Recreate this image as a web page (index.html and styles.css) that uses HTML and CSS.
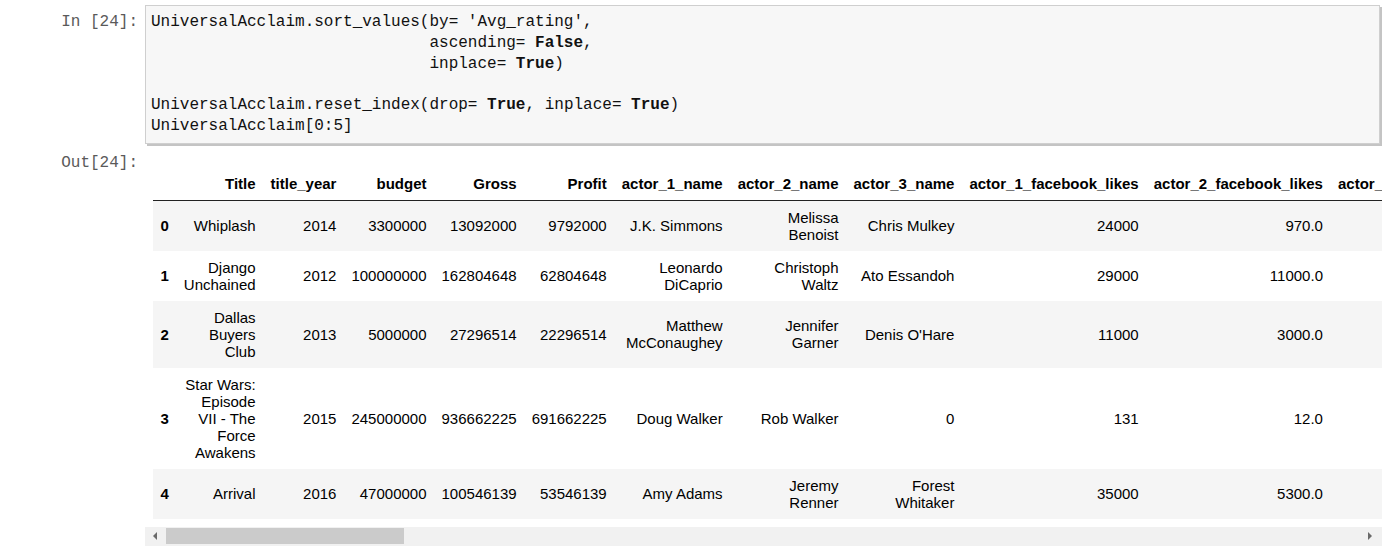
FILE: index.html
```html
<!DOCTYPE html>
<html>
<head>
<meta charset="utf-8">
<link rel="stylesheet" href="styles.css">
</head>
<body>
<div class="notebook">
  <div class="cell">
    <div class="prompt in-prompt">In&nbsp;[24]:</div>
<pre class="code">UniversalAcclaim.sort_values(by= 'Avg_rating',
                             ascending= <b>False</b>,
                             inplace= <b>True</b>)

UniversalAcclaim.reset_index(drop= <b>True</b>, inplace= <b>True</b>)
UniversalAcclaim[0:5]</pre>
  </div>
  <div class="cell out-cell">
    <div class="prompt out-prompt">Out[24]:</div>
    <div class="output">
      <div class="table-wrap">
        <table class="df">
          <thead>
            <tr>
              <th></th>
              <th>Title</th>
              <th>title_year</th>
              <th>budget</th>
              <th>Gross</th>
              <th>Profit</th>
              <th>actor_1_name</th>
              <th>actor_2_name</th>
              <th>actor_3_name</th>
              <th>actor_1_facebook_likes</th>
              <th>actor_2_facebook_likes</th>
              <th>actor_3_facebook_likes</th>
              <th>director_name</th>
            </tr>
          </thead>
          <tbody>
            <tr>
              <th>0</th>
              <td>Whiplash</td>
              <td>2014</td>
              <td>3300000</td>
              <td>13092000</td>
              <td>9792000</td>
              <td>J.K. Simmons</td>
              <td>Melissa Benoist</td>
              <td>Chris Mulkey</td>
              <td>24000</td>
              <td>970.0</td>
              <td>535.0</td>
              <td>Damien Chazelle</td>
            </tr>
            <tr>
              <th>1</th>
              <td>Django Unchained</td>
              <td>2012</td>
              <td>100000000</td>
              <td>162804648</td>
              <td>62804648</td>
              <td>Leonardo DiCaprio</td>
              <td>Christoph Waltz</td>
              <td>Ato Essandoh</td>
              <td>29000</td>
              <td>11000.0</td>
              <td>265.0</td>
              <td>Quentin Tarantino</td>
            </tr>
            <tr>
              <th>2</th>
              <td>Dallas Buyers Club</td>
              <td>2013</td>
              <td>5000000</td>
              <td>27296514</td>
              <td>22296514</td>
              <td>Matthew McConaughey</td>
              <td>Jennifer Garner</td>
              <td>Denis O'Hare</td>
              <td>11000</td>
              <td>3000.0</td>
              <td>896.0</td>
              <td>Jean-Marc Vallée</td>
            </tr>
            <tr>
              <th>3</th>
              <td>Star Wars: Episode VII - The Force Awakens</td>
              <td>2015</td>
              <td>245000000</td>
              <td>936662225</td>
              <td>691662225</td>
              <td>Doug Walker</td>
              <td>Rob Walker</td>
              <td>0</td>
              <td>131</td>
              <td>12.0</td>
              <td>0.0</td>
              <td>Doug Walker</td>
            </tr>
            <tr>
              <th>4</th>
              <td>Arrival</td>
              <td>2016</td>
              <td>47000000</td>
              <td>100546139</td>
              <td>53546139</td>
              <td>Amy Adams</td>
              <td>Jeremy Renner</td>
              <td>Forest Whitaker</td>
              <td>35000</td>
              <td>5300.0</td>
              <td>1000.0</td>
              <td>Denis Villeneuve</td>
            </tr>
          </tbody>
        </table>
      </div>
      <div class="hscroll">
        <span class="arrow arrow-left"></span>
        <span class="thumb"></span>
        <span class="track-rest"></span>
        <span class="arrow arrow-right"></span>
      </div>
    </div>
  </div>
</div>
</body>
</html>
```
FILE: styles.css
```css
html, body {
  margin: 0;
  background: #ffffff;
}

body {
  font-family: "Liberation Sans", Arial, sans-serif;
  color: #000;
}

.notebook {
  padding: 5px 18px 0 0;
}

.cell {
  display: flex;
  align-items: flex-start;
}

.prompt {
  flex: none;
  width: 145px;
  box-sizing: border-box;
  padding-right: 7px;
  text-align: right;
  font-family: "Liberation Mono", "DejaVu Sans Mono", monospace;
  font-size: 16px;
  line-height: 20.8px;
  color: #5a5a5a;
}

.in-prompt {
  padding-top: 7px;
}

.code {
  flex: 1;
  min-width: 0;
  margin: 0 2px 0 0;
  padding: 6px 5px;
  background: #f7f7f7;
  border: 1px solid #cfcfcf;
  box-shadow: 2px 2px 0 #c4c4c4;
  font-family: "Liberation Mono", "DejaVu Sans Mono", monospace;
  font-size: 16px;
  line-height: 20.8px;
  color: #111;
  white-space: pre;
  overflow: hidden;
}

.code b {
  font-weight: bold;
}

.out-cell {
  margin-top: 9px;
}

.output {
  flex: 1;
  min-width: 0;
}

.table-wrap {
  overflow: hidden;
  padding: 14px 0 8px 8px;
}

.df {
  width: 1px;
  border-collapse: collapse;
  border-spacing: 0;
  font-size: 15px;
  line-height: 17px;
  color: #000;
}

.df th,
.df td {
  padding: 8px 7.5px;
  text-align: right;
  vertical-align: middle;
}

.df th {
  font-weight: bold;
}

.df thead th {
  border-bottom: 1px solid #222;
  white-space: nowrap;
}

.df tbody tr:nth-child(odd) {
  background: #f5f5f5;
}

.hscroll {
  display: flex;
  align-items: center;
  height: 19px;
  background: #f1f1f1;
}

.arrow {
  flex: none;
  width: 0;
  height: 0;
  border-top: 4px solid transparent;
  border-bottom: 4px solid transparent;
}

.arrow-left {
  margin-left: 8px;
  border-right: 4px solid #6a6a6a;
}

.arrow-right {
  margin-right: 10px;
  border-left: 4px solid #6a6a6a;
}

.thumb {
  flex: none;
  width: 238px;
  height: 16px;
  margin-left: 9px;
  background: #cbcbcb;
}

.track-rest {
  flex: 1;
}
```
